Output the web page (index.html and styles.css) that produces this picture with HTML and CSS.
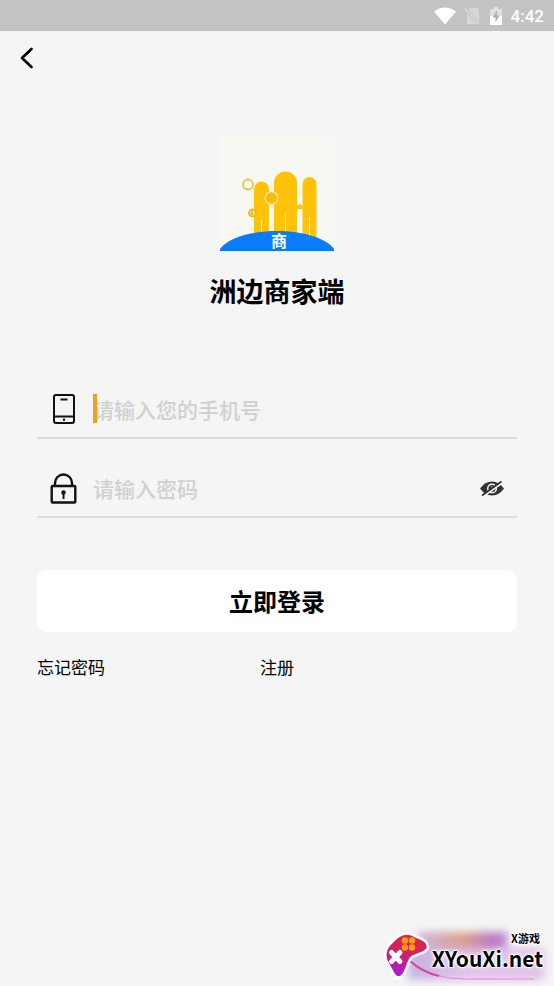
FILE: index.html
```html
<!DOCTYPE html>
<html lang="zh-CN">
<head>
<meta charset="utf-8">
<meta name="viewport" content="width=device-width, initial-scale=1">
<title>洲边商家端</title>
<link rel="stylesheet" href="styles.css">
</head>
<body>
<header class="status">
  <svg width="22" height="18" viewBox="0 0 22 18" aria-hidden="true"><path d="M0 4.500Q11-3.500 22 4.500L11 17.500Z" fill="#fff"/></svg>
  <svg width="16" height="18" viewBox="0 0 16 18" aria-hidden="true"><path d="M6 1h9v16H3V5z" fill="#d6d6d6"/><path d="M0 1l15 16" stroke="#c3c3c3" stroke-width="3.500"/><path d="M1 2l14 15" stroke="#dcdcdc" stroke-width="1.300"/></svg>
  <svg width="12" height="18" viewBox="0 0 12 18" aria-hidden="true"><path d="M4 0h4v2h4v7H0V2h4z" fill="#e0e0e0"/><path d="M0 9h12v9H0z" fill="#fff"/><path d="M7 3L2.500 10.500H5.500V15.500L9.500 8.500H7z" fill="#b0b0b0"/></svg>
  <time class="clock">4:42</time>
</header>
<nav class="nav">
  <button class="back" type="button" aria-label="返回">
    <svg width="14" height="22" viewBox="0 0 14 22" aria-hidden="true"><path d="M11.500 2L2 11L11.500 20" fill="none" stroke="#000" stroke-width="2.600" stroke-linecap="round" stroke-linejoin="round"/></svg>
  </button>
</nav>
<main class="page">
  <svg class="logo" width="114" height="114" viewBox="0 0 114 114" role="img" aria-label="洲边">
    <path d="M0 0h114v114H0z" fill="#f8f8f2"/>
    <g fill="#ffc20a">
      <path d="M34 114V52a7.500 7.500 0 0 1 15 0v62zM54 114V46a11.500 11.500 0 0 1 23 0v68zM82.500 114V47a7 7 0 0 1 14 0v67z"/>
      <path d="M77 72v-3q3-4 5.500 0v3z"/>
    </g>
    <path d="M41.500 83v20M65.500 77v26M89.500 80v26" stroke="#fff5cf" stroke-width="1"/>
    <circle cx="28" cy="47.500" r="5" fill="#f8f8f2" stroke="#e9c443" stroke-width="1.800"/>
    <circle cx="51.500" cy="61" r="6.300" fill="#f6bb16" stroke="#ffe690" stroke-width="1.300"/>
    <circle cx="32.500" cy="76" r="3.500" fill="#f8df7c" stroke="#e9b51d" stroke-width="1.800"/>
    <path d="M32 74.500v3.500" stroke="#d39b00"/>
    <path d="M0 114v-2C8 101 31 94 57 94s49 7 57 18v2z" fill="#087cfb"/>
    <text class="logo-text" x="59" y="110" text-anchor="middle">商</text>
  </svg>
  <h1 class="title">洲边商家端</h1>
  <form class="form">
    <div class="field">
      <label class="field-icon" for="phone" aria-label="手机号">
        <svg width="28" height="32" viewBox="0 0 28 32" aria-hidden="true"><g fill="none" stroke="#111" stroke-width="2"><rect x="5" y="2" width="20" height="28" rx="2"/><path d="M5 23.500h20M11.500 6.500h7"/></g><circle cx="15" cy="26.800" r="1.200" fill="#111"/></svg>
      </label>
      <span class="caret"></span>
      <input class="input" id="phone" type="tel" placeholder="请输入您的手机号">
    </div>
    <div class="field">
      <label class="field-icon" for="password" aria-label="密码">
        <svg width="28" height="32" viewBox="0 0 28 32" aria-hidden="true"><path d="M6 13.500V11a8.500 8.500 0 0 1 17 0v2.500" fill="none" stroke="#111" stroke-width="2.400"/><rect x="2.700" y="14" width="23.600" height="16.500" rx="1" fill="none" stroke="#111" stroke-width="2.400"/><circle cx="14.500" cy="20.500" r="2.200" fill="#111"/><path d="M13.500 20h2v7h-2z" fill="#111"/></svg>
      </label>
      <input class="input" id="password" type="password" placeholder="请输入密码">
      <button class="eye" type="button" aria-label="显示密码">
        <svg width="26" height="18" viewBox="0 0 26 18" aria-hidden="true"><path d="M1 9.500Q6 2.500 13 2.500t12 7q-5 7-12 7T1 9.500z" fill="#333"/><circle cx="13" cy="9.500" r="4.300" fill="none" stroke="#f5f5f5" stroke-width="1.500"/><path d="M12 7.500q2 0 2 2" stroke="#bbb" fill="none"/><path d="M4 17.500L23 4" stroke="#f5f5f5" stroke-width="2"/><path d="M3 16.500L22.500 2.500" stroke="#333" stroke-width="1.600"/></svg>
      </button>
    </div>
    <button class="submit" type="button">立即登录</button>
    <div class="links"><a href="#forgot">忘记密码</a><a href="#register">注册</a></div>
  </form>
</main>
<aside class="mark">
  <svg class="mark-art" width="180" height="70" viewBox="0 0 180 70" aria-hidden="true">
    <defs>
      <linearGradient id="pad" x1="0.600" y1="0" x2="0.400" y2="1"><stop offset="0" stop-color="#e02640"/><stop offset=".45" stop-color="#cf2068"/><stop offset="1" stop-color="#a01fe0"/></linearGradient>
      <linearGradient id="haze" x1="0" x2="1" y1="0" y2="0"><stop offset="0" stop-color="#d0b4e0"/><stop offset=".5" stop-color="#dba08c"/><stop offset=".85" stop-color="#b477c8"/><stop offset="1" stop-color="#c896d8"/></linearGradient>
      <linearGradient id="low" x1="0" x2="1" y1="0" y2="0"><stop offset="0" stop-color="#b9a2d6"/><stop offset=".5" stop-color="#e2b4ec"/><stop offset="1" stop-color="#d9b4e2"/></linearGradient>
      <filter id="soft" x="-20%" y="-50%" width="140%" height="200%"><feGaussianBlur stdDeviation="4"/></filter>
    </defs>
    <g filter="url(#soft)"><path d="M44 16h90v18H44z" fill="url(#haze)"/><path d="M34 32h136v32H34z" fill="url(#low)" opacity=".8"/></g>
    <path d="M36 45Q57 63 90 63H160" fill="none" stroke="#dc86dc" stroke-width="1"/>
    <path d="M36 45Q48 56 65 60" fill="none" stroke="#d83fa5" stroke-width="2"/>
    <path d="M29 18Q35 16 43 21C50 23 54 27 54 31c0 6-11 7-16 10C33 46 33 56 28 60q-5 4-9-3L12 44Q9 33 18 26q5-6 11-8z" fill="url(#pad)" stroke="#fff" stroke-width="2.500" stroke-linejoin="round"/>
    <g fill="#ff9d13"><circle cx="31" cy="24.500" r="3.200"/><circle cx="38" cy="24.500" r="3.200"/><circle cx="31" cy="31.500" r="3.200"/><circle cx="38" cy="31.500" r="3.200"/></g>
    <path d="M17.500 36.500l8.500 9M26 36.500l-8.500 9" stroke="#fff" stroke-width="5" stroke-linecap="round"/>
  </svg>
  <div class="mark-text"><span class="mark-small">X游戏</span><span class="mark-big">XYouXi.net</span></div>
</aside>
</body>
</html>
```
FILE: styles.css
```css
* { box-sizing: border-box; }
body {
  margin: 0;
  min-height: 100vh;
  background: #f5f5f5;
  color: #000;
  font-family: "Noto Sans CJK SC", sans-serif;
  position: relative;
}
button, input { font: inherit; color: inherit; border: 0; padding: 0; background: none; }
svg { display: block; }
.status {
  height: 31px;
  padding: 0 10px;
  background: #c3c3c3;
  display: flex;
  align-items: center;
  justify-content: flex-end;
}
.status svg + svg { margin-left: 8px; }
.status svg:nth-of-type(3) { margin-left: 10px; }
.clock { margin-left: 9px; color: #fff; font: 500 17px/20px Roboto, sans-serif; }
.nav { height: 54px; padding: 0 20px; display: flex; align-items: center; }
.back { display: block; cursor: pointer; }
.page { padding: 52px 37px 0; display: flex; flex-direction: column; align-items: center; }
.logo-text { font-size: 16px; font-weight: 700; fill: #fff; }
.title { margin: 20px 0 0; font-size: 27px; line-height: 40px; font-weight: 700; }
.form { width: 100%; margin-top: 69px; }
.field {
  height: 59px;
  padding: 0 12px;
  border-bottom: 2px solid #dcdcdc;
  display: flex;
  align-items: center;
  position: relative;
}
.field + .field { margin-top: 20px; }
.field-icon { margin-right: 16px; }
.input { flex: 1; min-width: 0; height: 40px; font-size: 21px; font-weight: 500; outline: 0; }
.input::placeholder { color: #d0d0d0; opacity: 1; }
.caret { position: absolute; left: 56px; width: 4px; height: 29px; background: #f0a020; }
.eye { cursor: pointer; }
.submit {
  display: block;
  width: 100%;
  height: 62px;
  margin-top: 52px;
  padding-bottom: 2px;
  border-radius: 9px;
  background: #fff;
  font-size: 24px;
  font-weight: 700;
  cursor: pointer;
}
.links { margin-top: 22px; display: grid; grid-template-columns: 223px 1fr; font-size: 17px; line-height: 25px; }
.links a { color: inherit; text-decoration: none; justify-self: start; }
.mark { position: absolute; right: 0; bottom: 0; overflow: hidden; }
.mark-text {
  position: absolute;
  right: 11px;
  bottom: 15px;
  display: flex;
  flex-direction: column;
  align-items: flex-end;
  font-weight: 700;
  white-space: nowrap;
  text-shadow: 1px 0 #fff, -1px 0 #fff, 0 1px #fff, 0 -1px #fff, 0 0 4px #fff, 0 0 4px #fff;
}
.mark-small { font-size: 11px; line-height: 16px; margin-right: 3px; }
.mark-big { font-size: 21px; line-height: 25px; }
```
